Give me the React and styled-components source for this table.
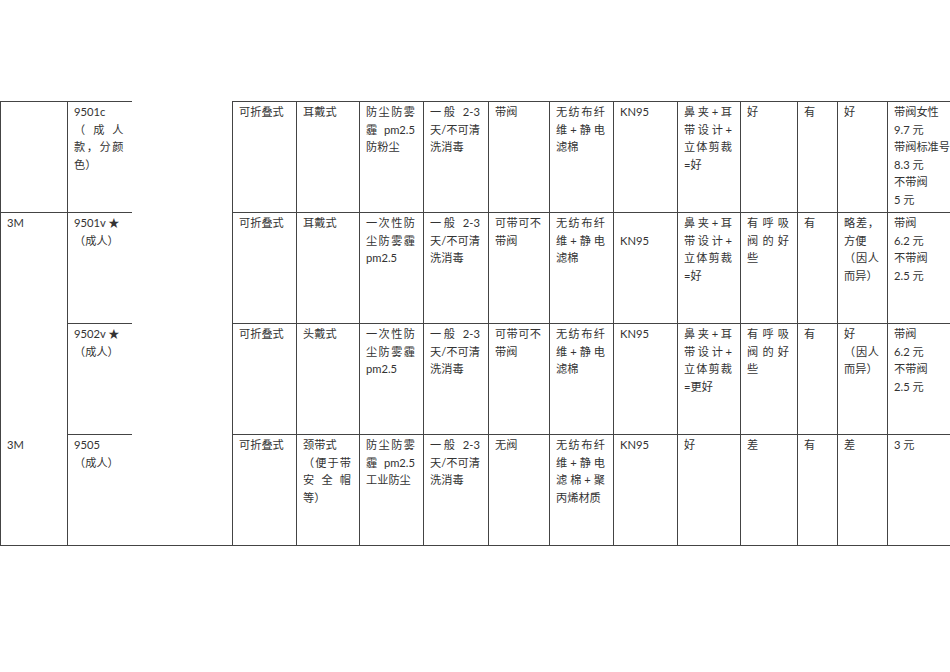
import React from 'react';
import styled, { createGlobalStyle } from 'styled-components';

const GlobalStyle = createGlobalStyle`
  html, body {
    margin: 0;
    padding: 0;
    background: #ffffff;
    overflow: hidden;
  }
  body {
    font-family: "Lato", "Noto Sans CJK SC", sans-serif;
    font-size: 11.2px;
    color: #333;
  }
`;

const Page = styled.div`
  width: 950px;
  height: 672px;
  overflow: hidden;
  padding-top: 101px;
  box-sizing: border-box;
`;

const Table = styled.table`
  border-collapse: collapse;
  table-layout: fixed;
  width: 977px;
`;

const Cell = styled.td`
  border: 1px solid #444;
  border-top-style: ${(props) => (props.$hideTop ? 'hidden' : 'solid')};
  height: 111px;
  box-sizing: border-box;
  vertical-align: top;
  padding: 1px 8px 0 6px;
  line-height: 17.6px;
  text-align: justify;
  word-break: normal;
  line-break: strict;
  overflow: hidden;
`;

// the empty middle column: no top or left rule, only the bottom and right ones
const Spacer = styled.td`
  border: 1px solid #444;
  border-top-style: hidden;
  border-left-style: hidden;
  padding: 0;
`;

const widths = [67, 64, 101, 64, 63, 64, 65, 61, 64, 64, 63, 57, 40, 50, 90];

const rows = [
  {
    brand: '',
    model: '9501c\n（成人款，分颜色）',
    cells: [
      '可折叠式',
      '耳戴式',
      '防尘防雾霾 pm2.5防粉尘',
      '一般 2-3天/不可清洗消毒',
      '带阀',
      '无纺布纤维+静电滤棉',
      'KN95',
      '鼻夹+耳带设计+立体剪裁=好',
      '好',
      '有',
      '好',
      '带阀女性\n9.7 元\n带阀标准号\n8.3 元\n不带阀\n5 元',
    ],
  },
  {
    brand: '3M',
    brandSpan: 2,
    model: '9501v ★\n（成人）',
    cells: [
      '可折叠式',
      '耳戴式',
      '一次性防尘防雾霾pm2.5',
      '一般 2-3天/不可清洗消毒',
      '可带可不带阀',
      '无纺布纤维+静电滤棉',
      '\nKN95',
      '鼻夹+耳带设计+立体剪裁=好',
      '有呼吸阀的好些',
      '有',
      '略差，方便\n（因人而异）',
      '带阀\n6.2 元\n不带阀\n2.5 元',
    ],
  },
  {
    skipBrand: true,
    model: '9502v ★\n（成人）',
    cells: [
      '可折叠式',
      '头戴式',
      '一次性防尘防雾霾pm2.5',
      '一般 2-3天/不可清洗消毒',
      '可带可不带阀',
      '无纺布纤维+静电滤棉',
      'KN95',
      '鼻夹+耳带设计+立体剪裁=更好',
      '有呼吸阀的好些',
      '有',
      '好\n（因人而异）',
      '带阀\n6.2 元\n不带阀\n2.5 元',
    ],
  },
  {
    brand: '3M',
    hideTop: true,
    model: '9505\n（成人）',
    cells: [
      '可折叠式',
      '颈带式\n（便于带安全帽等）',
      '防尘防雾霾 pm2.5工业防尘',
      '一般 2-3天/不可清洗消毒',
      '无阀',
      '无纺布纤维+静电滤棉+聚丙烯材质',
      'KN95',
      '好',
      '差',
      '有',
      '差',
      '3 元',
    ],
  },
];

function Lines({ text }) {
  const parts = text.split('\n');
  return parts.map((p, i) => (
    <React.Fragment key={i}>
      {p.replace(/\+/g, '+\u200B')}
      {i < parts.length - 1 && <br />}
    </React.Fragment>
  ));
}

export default function App() {
  return (
    <Page lang="zh-CN">
      <GlobalStyle />
      <Table>
        <colgroup>
          {widths.map((w, i) => (
            <col key={i} style={{ width: w }} />
          ))}
        </colgroup>
        <tbody>
          {rows.map((row, r) => (
            <tr key={r}>
              {!row.skipBrand && (
                <Cell rowSpan={row.brandSpan || 1} $hideTop={row.hideTop}>
                  {row.brand}
                </Cell>
              )}
              <Cell>
                <Lines text={row.model} />
              </Cell>
              {r === 0 && <Spacer rowSpan={4} />}
              {row.cells.map((c, i) => (
                <Cell key={i}>
                  <Lines text={c} />
                </Cell>
              ))}
            </tr>
          ))}
        </tbody>
      </Table>
    </Page>
  );
}
